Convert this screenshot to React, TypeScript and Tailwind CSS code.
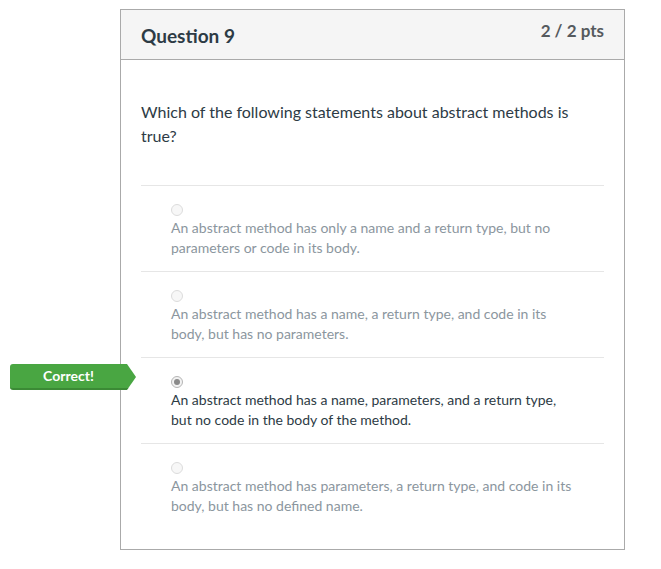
import React from "react";

type Answer = { text: string[]; selected?: boolean };

const answers: Answer[] = [
  {
    text: [
      "An abstract method has only a name and a return type, but no",
      "parameters or code in its body.",
    ],
  },
  {
    text: [
      "An abstract method has a name, a return type, and code in its",
      "body, but has no parameters.",
    ],
  },
  {
    text: [
      "An abstract method has a name, parameters, and a return type,",
      "but no code in the body of the method.",
    ],
    selected: true,
  },
  {
    text: [
      "An abstract method has parameters, a return type, and code in its",
      "body, but has no defined name.",
    ],
  },
];

const Radio: React.FC<{ checked?: boolean }> = ({ checked }) => (
  <span
    className={
      "flex items-center justify-center w-[12px] h-[12px] rounded-full border " +
      (checked
        ? "border-[#b5b5b5] bg-[#f2f2f2]"
        : "border-[#dcdcdc] bg-[#f7f7f7]")
    }
  >
    {checked ? (
      <span className="block w-[6px] h-[6px] rounded-full bg-[#8a8a8a]" />
    ) : null}
  </span>
);

const App: React.FC = () => {
  return (
    <div
      className="relative w-[661px] h-[569px] bg-white pt-[9px] pl-[120px]"
      style={{ fontFamily: "Lato, 'Open Sans', sans-serif" }}
    >
      <div className="w-[505px] h-[541px] border border-[#aaaaaa] bg-white">
        <div className="flex justify-between h-[50px] bg-[#f5f5f5] border-b border-[#aaaaaa] pl-[20px] pr-[20px]">
          <h2 className="pt-[12px] text-[19px] leading-[27px] font-bold text-[#2d3b45]">
            Question 9
          </h2>
          <div className="pt-[8px] text-[17px] leading-[25px] font-bold text-[#555a5e]">
            2 / 2 pts
          </div>
        </div>

        <div className="px-[20px] pt-[40px]">
          <p className="text-[16px] leading-[24px] text-[#2d3b45]">
            Which of the following statements about abstract methods is
            <br />
            true?
          </p>

          <div className="mt-[37px]">
            {answers.map((a, i) => (
              <div
                key={i}
                className="border-t border-[#e6e6e6] pt-[15px] pb-[13px] pl-[30px]"
              >
                <div className="h-[17px] flex items-center">
                  <Radio checked={a.selected} />
                </div>
                <div
                  className={
                    "text-[14px] leading-[20px] " +
                    (a.selected ? "text-[#2d3b45]" : "text-[#8b969e]")
                  }
                >
                  {a.text.map((line, j) => (
                    <div key={j}>{line}</div>
                  ))}
                </div>
              </div>
            ))}
          </div>
        </div>
      </div>

      <div className="absolute left-[10px] top-[364px] w-[126px] h-[26px] [clip-path:polygon(0_0,117px_0,126px_13px,117px_26px,0_26px)] rounded-l-[3px] bg-[#49a642] border-b-2 border-[#3b8a35] flex items-center justify-center pr-[9px]">
        <span className="text-[14px] font-bold text-white leading-none">
          Correct!
        </span>
      </div>
    </div>
  );
};

export default App;
